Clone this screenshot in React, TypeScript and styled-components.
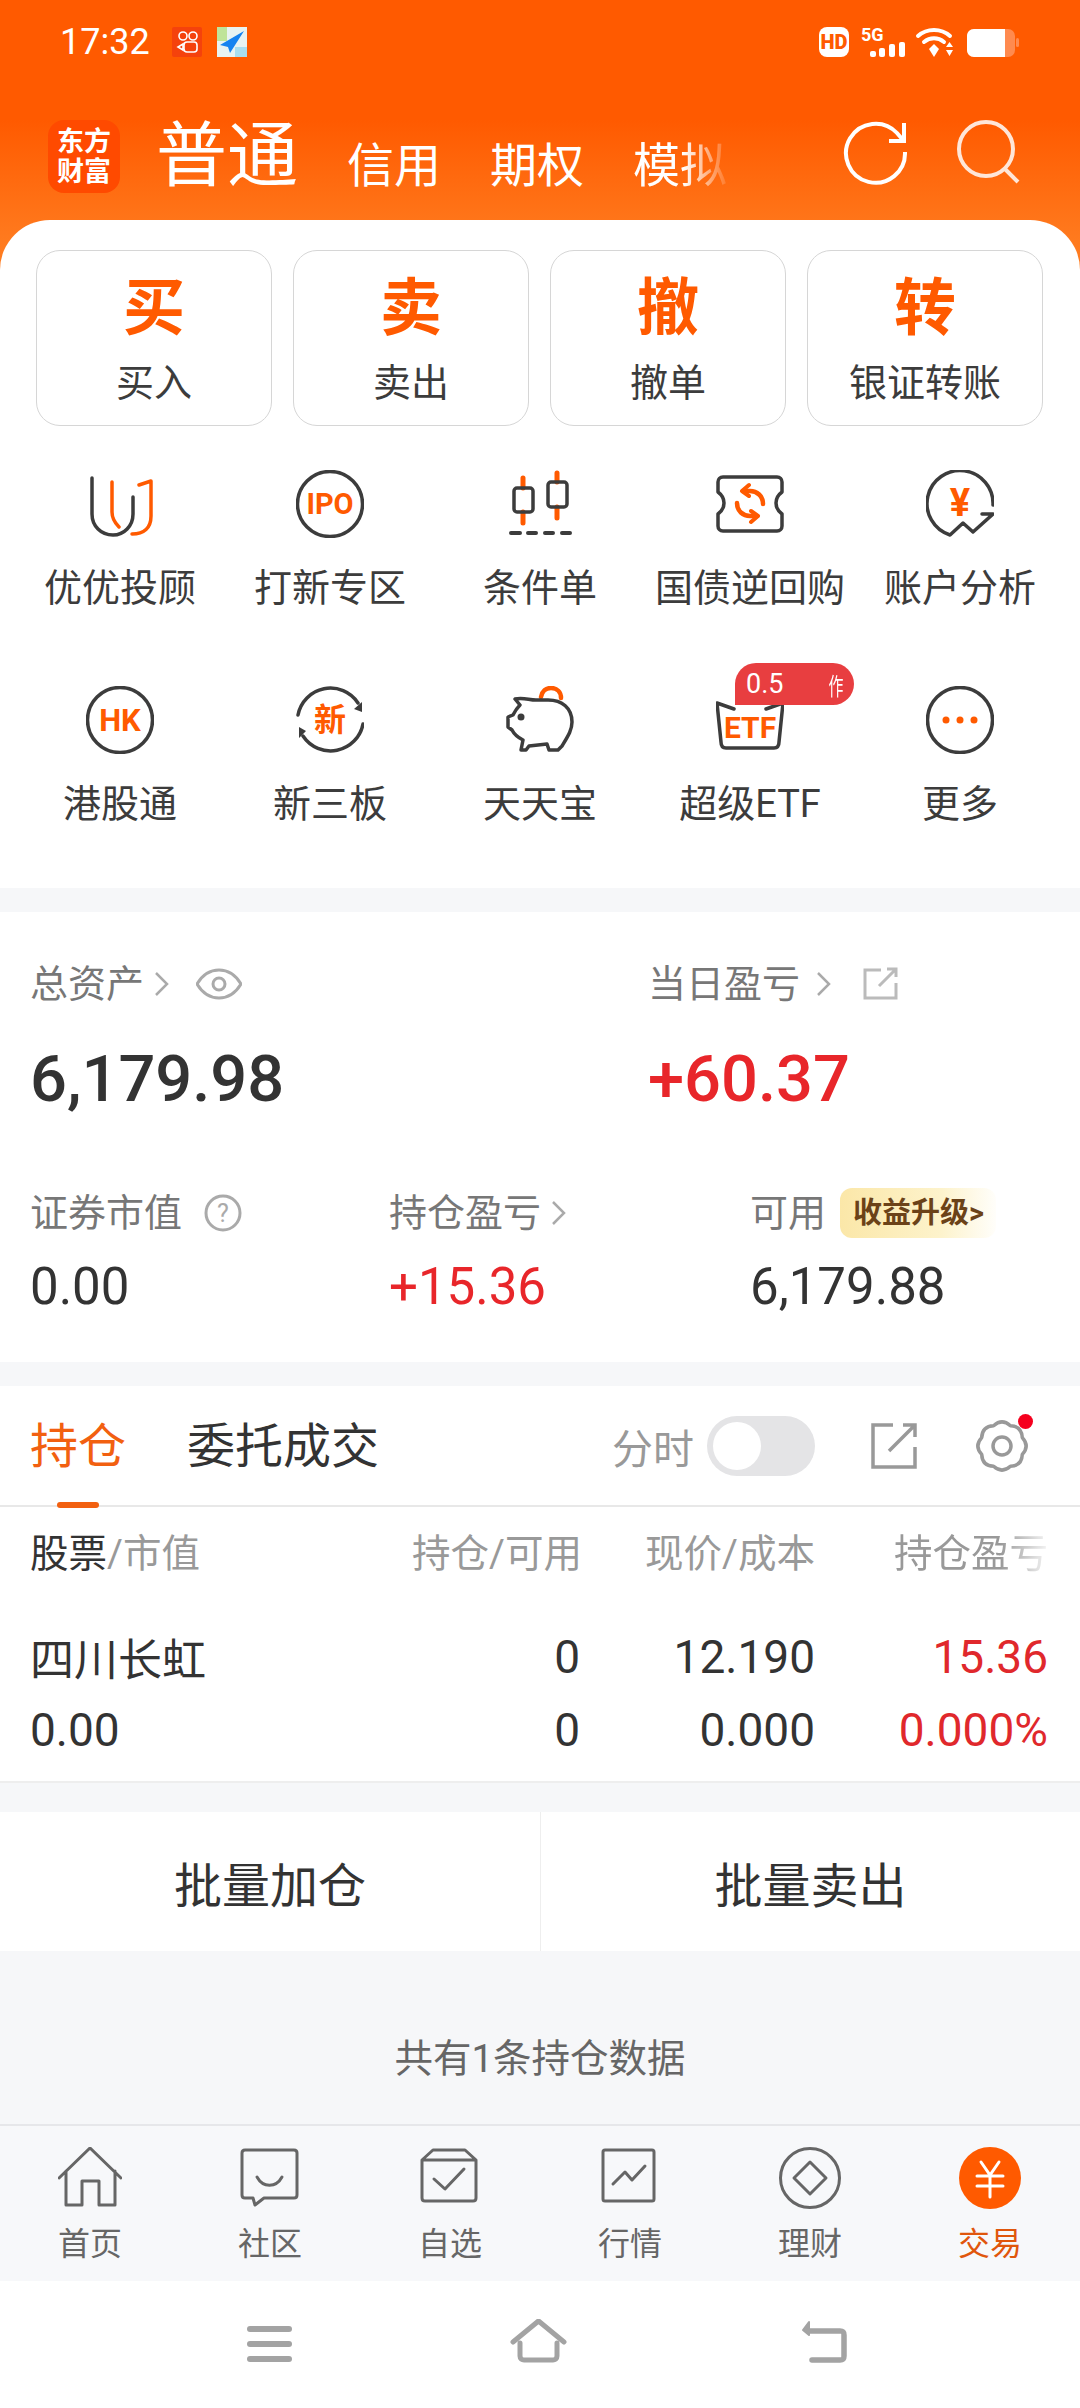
import React from "react";
import styled, { createGlobalStyle } from "styled-components";

const ORANGE = "#ff5a00";
const INK = "#3c3c3c";
const RED = "#e8262a";

const GlobalStyle = createGlobalStyle`
  html, body {
    margin: 0;
    padding: 0;
    background: #fff;
  }
  * {
    box-sizing: border-box;
  }
`;

const Page = styled.div`
  width: 1080px;
  height: 2408px;
  display: flex;
  flex-direction: column;
  overflow: hidden;
  background: #fff;
  color: #333;
  font-family: Roboto, "Noto Sans CJK SC", sans-serif;
`;

const Top = styled.div`
  background: linear-gradient(#ff5a00 0, #ff5a00 120px, #ff7a1e 240px, #ff7e22 280px) no-repeat;
  background-size: 100% 280px;
`;

const StatusBar = styled.div`
  height: 84px;
  padding: 0 60px;
  display: flex;
  align-items: center;
  color: #fff;
`;

const Clock = styled.div`
  font-size: 36px;
  width: 112px;
`;

const StatusRight = styled.div`
  margin-left: auto;
  display: flex;
  align-items: center;
`;

const AppIcon = styled.svg`
  margin-right: 15px;
  display: block;
`;

const TopNav = styled.div`
  height: 136px;
  padding: 36px 0 0 48px;
  display: flex;
  align-items: flex-start;
  color: #fff;
`;

const Logo = styled.div`
  width: 72px;
  height: 73px;
  border-radius: 16px;
  background: #ff4a00;
  display: grid;
  place-items: center;
  font-size: 27px;
  line-height: 30px;
  font-weight: 700;
  text-align: center;
`;

const MainTab = styled.div`
  margin-left: 36px;
  font-size: 71px;
  line-height: 76px;
  margin-top: -2px;
`;

const SubTab = styled.div<{ $fade?: boolean }>`
  margin-left: 49px;
  font-size: 47px;
  line-height: 56px;
  margin-top: 18px;
  ${(p) =>
    p.$fade &&
    "-webkit-mask-image: linear-gradient(90deg, #000 50px, rgba(0,0,0,.15) 92px); mask-image: linear-gradient(90deg, #000 50px, rgba(0,0,0,.15) 92px);"}
`;

const TopActions = styled.div`
  margin-left: auto;
  padding-right: 57px;
  display: flex;
  gap: 48px;
`;

const Sheet = styled.div`
  background: #fff;
  border-radius: 50px 50px 0 0;
  padding: 30px 37px 66px 36px;
`;

const ActionGrid = styled.div`
  display: grid;
  grid-template-columns: repeat(4, 1fr);
  gap: 21px;
`;

const ActionCard = styled.div`
  height: 176px;
  border: 1.5px solid #d6d6d6;
  border-radius: 24px;
  display: flex;
  flex-direction: column;
  align-items: center;
`;

const ActionGlyph = styled.div`
  font-size: 62px;
  line-height: 64px;
  font-weight: 700;
  color: ${ORANGE};
  margin-top: 26px;
`;

const ActionLabel = styled.div`
  font-size: 38px;
  line-height: 44px;
  margin-top: 20px;
  color: ${INK};
`;

const ShortcutGrid = styled.div`
  margin: 44px -21px 0;
  display: grid;
  grid-template-columns: repeat(5, 210px);
  grid-auto-rows: 136px;
  row-gap: 80px;
`;

const Shortcut = styled.div`
  position: relative;
  display: flex;
  flex-direction: column;
  align-items: center;
`;

const ShortcutLabel = styled.div`
  margin-top: 32px;
  font-size: 38px;
  line-height: 36px;
  color: ${INK};
  white-space: nowrap;
`;

const PromoBadge = styled.div`
  position: absolute;
  left: 90px;
  top: -23px;
  width: 119px;
  height: 42px;
  padding: 0 6px 0 11px;
  border-radius: 21px 21px 21px 0;
  background: #e83e40;
  color: #fff;
  font-size: 27px;
  display: flex;
  align-items: center;
  justify-content: space-between;
`;

const PromoGlyph = styled.span`
  display: inline-block;
  font-size: 24px;
  transform: scaleX(0.62);
`;

const Band = styled.div<{ $h: number }>`
  height: ${(p) => p.$h}px;
  flex: none;
  background: #f6f7f9;
`;

const Assets = styled.div`
  height: 450px;
  flex: none;
  padding: 55px 0 0 30px;
`;

const AssetRow = styled.div`
  display: grid;
  grid-template-columns: 618px 1fr;
`;

const DetailRow = styled.div`
  margin-top: 85px;
  display: grid;
  grid-template-columns: 359px 361px 1fr;
`;

const LabelLine = styled.div`
  height: 34px;
  display: flex;
  align-items: center;
  font-size: 38px;
  line-height: 34px;
  color: #777;
  white-space: nowrap;
`;

const BigValue = styled.div<{ $red?: boolean }>`
  margin-top: 46px;
  font-size: 65px;
  line-height: 64px;
  font-weight: 500;
  color: ${(p) => (p.$red ? RED : "#333")};
`;

const SmallValue = styled.div<{ $red?: boolean }>`
  margin-top: 32px;
  font-size: 51px;
  line-height: 50px;
  color: ${(p) => (p.$red ? RED : "#333")};
`;

const Upgrade = styled.div`
  margin-left: 14px;
  width: 156px;
  height: 50px;
  padding-left: 13px;
  border-radius: 12px;
  background: linear-gradient(90deg, #fbe7a8, #fdf3cc 65%, rgba(255, 250, 232, 0.2));
  color: #6b4218;
  font-size: 29px;
  line-height: 50px;
  font-weight: 700;
  white-space: nowrap;
`;

const TabBarTop = styled.div`
  height: 121px;
  flex: none;
  padding: 0 50px 0 30px;
  border-bottom: 2px solid #e8e8e8;
  display: flex;
  align-items: center;
`;

const PosTab = styled.div<{ $active?: boolean }>`
  position: relative;
  margin: 3px 61px 0 0;
  font-size: 48px;
  line-height: 60px;
  color: ${(p) => (p.$active ? "#f26010" : "#333")};
  ${(p) =>
    p.$active &&
    `&::after {
      content: "";
      position: absolute;
      left: 27px;
      bottom: -31px;
      width: 42px;
      height: 6px;
      border-radius: 3px;
      background: #f26010;
    }`}
`;

const TabTools = styled.div`
  margin-left: auto;
  display: flex;
  align-items: center;
`;

const ToolLabel = styled.div`
  font-size: 41px;
  color: #999;
  margin-right: 13px;
`;

const Toggle = styled.div`
  width: 108px;
  height: 60px;
  border-radius: 30px;
  background: #e4e4e6;
  padding: 6px;
  margin-right: 56px;
`;

const Knob = styled.div`
  width: 48px;
  height: 48px;
  border-radius: 50%;
  background: #fff;
`;

const ToolIcon = styled.svg`
  display: block;
`;

const GearWrap = styled.div`
  position: relative;
  margin-left: 57px;
`;

const RedDot = styled.div`
  position: absolute;
  right: -3px;
  top: -6px;
  width: 15px;
  height: 15px;
  border-radius: 50%;
  background: #f5001e;
`;

const TableRow = styled.div<{ $h: number }>`
  height: ${(p) => p.$h}px;
  flex: none;
  padding: 0 32px 0 30px;
  display: grid;
  grid-template-columns: 382px 168px 235px 233px;
  align-items: center;
`;

const HeadCell = styled.div<{ $left?: boolean; $fade?: boolean }>`
  font-size: 38.5px;
  line-height: 44px;
  margin-top: -3px;
  color: #999;
  white-space: nowrap;
  text-align: ${(p) => (p.$left ? "left" : "right")};
  ${(p) =>
    p.$fade &&
    "-webkit-mask-image: linear-gradient(90deg, #000 185px, rgba(0,0,0,.1) 233px); mask-image: linear-gradient(90deg, #000 185px, rgba(0,0,0,.1) 233px);"}
  b {
    font-weight: 400;
    color: #333;
  }
`;

const Cell = styled.div<{ $left?: boolean; $red?: boolean }>`
  font-size: 46px;
  color: ${(p) => (p.$red ? "#e0282c" : "#333")};
  white-space: nowrap;
  text-align: ${(p) => (p.$left ? "left" : "right")};
`;

const NameCell = styled(Cell)`
  font-size: 44px;
`;

const TableBody = styled.div`
  padding: 17px 0 15px;
  border-bottom: 2px solid #eeeeee;
  flex: none;
`;

const Batch = styled.div`
  height: 139px;
  flex: none;
  display: grid;
  grid-template-columns: 1fr 1fr;
  background: #fff;
`;

const BatchButton = styled.div<{ $divided?: boolean }>`
  display: grid;
  place-items: center;
  font-size: 48px;
  color: #333;
  border-left: ${(p) => (p.$divided ? "1.5px solid #eeeeee" : "none")};
`;

const Summary = styled.div`
  height: 173px;
  flex: none;
  padding-top: 86px;
  background: #f6f7f9;
  text-align: center;
  font-size: 38.5px;
  line-height: 44px;
  color: #666;
`;

const BottomTabs = styled.div`
  height: 157px;
  flex: none;
  border-top: 2px solid #e6e7ea;
  background: #f7f8fa;
  display: grid;
  grid-template-columns: repeat(6, 180px);
`;

const BottomTab = styled.div<{ $active?: boolean }>`
  display: flex;
  flex-direction: column;
  align-items: center;
  padding-top: 21px;
  font-size: 32px;
  line-height: 32px;
  color: ${(p) => (p.$active ? "#e0560c" : "#666")};
`;

const BottomIcon = styled.svg`
  display: block;
  margin-bottom: 19px;
`;

const SystemNav = styled.div`
  flex: 1;
  background: #fff;
  padding: 38px 0 0 247px;
  display: flex;
  align-items: flex-start;
`;

const SysIcon = styled.svg<{ $gap: number }>`
  display: block;
  margin-right: ${(p) => p.$gap}px;
`;

const IconWord = styled.text`
  font-family: Roboto, "Noto Sans CJK SC", sans-serif;
  font-weight: 700;
  text-anchor: middle;
`;

const S = { fill: "none", stroke: INK, strokeWidth: 3.5, strokeLinecap: "round", strokeLinejoin: "round" } as const;
const O = { ...S, stroke: ORANGE };

const Icon68: React.FC<{ children: React.ReactNode }> = ({ children }) => (
  <svg width="68" height="68" viewBox="0 0 68 68" style={{ display: "block", flex: "none" }}>
    {children}
  </svg>
);

// wavy 8-lobed outline for the settings gear
const gearPath = (() => {
  const cx = 28;
  const cy = 26;
  let d = "";
  for (let i = 0; i < 8; i++) {
    const a0 = (Math.PI / 4) * i - Math.PI / 8;
    const a1 = a0 + Math.PI / 8;
    const a2 = a0 + Math.PI / 4;
    const p0 = `${(cx + 22 * Math.cos(a0)).toFixed(1)} ${(cy + 22 * Math.sin(a0)).toFixed(1)}`;
    const c = `${(cx + 28 * Math.cos(a1)).toFixed(1)} ${(cy + 28 * Math.sin(a1)).toFixed(1)}`;
    const p2 = `${(cx + 22 * Math.cos(a2)).toFixed(1)} ${(cy + 22 * Math.sin(a2)).toFixed(1)}`;
    d += `${i === 0 ? `M${p0}` : ""}Q${c} ${p2}`;
  }
  return `${d}Z`;
})();

const shortcuts: { label: string; icon: React.ReactNode; badge?: boolean }[] = [
  {
    label: "优优投顾",
    icon: (
      <>
        <path {...S} d="M6 8V44C6 56 15 65 27 65C38 65 47 56 47 44V27" />
        <path {...O} d="M26 12V42C26 48 29 53 33 57" />
        <path {...O} d="M46 64C58 64 65 58 65 46V11L53 15" />
      </>
    ),
  },
  {
    label: "打新专区",
    icon: (
      <>
        <circle {...S} cx="34" cy="34" r="32.5" />
        <IconWord x="34" y="44" fontSize="29" fill={ORANGE}>IPO</IconWord>
      </>
    ),
  },
  {
    label: "条件单",
    icon: (
      <>
        <path {...O} strokeWidth="5" d="M17 8V18M17 42V53M51 3V12M51 37V48" />
        <rect {...S} x="8" y="18" width="19" height="24" rx="3" />
        <rect {...S} x="42" y="12" width="19" height="25" rx="3" />
        <path {...S} strokeWidth="4" d="M5 63H14M22 63H30M39 63H47M56 63H64" />
      </>
    ),
  },
  {
    label: "国债逆回购",
    icon: (
      <>
        <path {...S} d="M7 7H61C64 7 66 9 66 12V22C62 25 60 29 60 33C60 38 62 41 66 44V56C66 59 64 61 61 61H7C4 61 2 59 2 56V44C6 41 8 38 8 33C8 29 6 25 2 22V12C2 9 4 7 7 7Z" />
        <path {...O} strokeWidth="4.5" d="M47 34C47 26 41 21 34 21H29M21 33C21 41 27 46 34 46H39" />
        <path {...O} strokeWidth="4" d="M33 15L26 21L33 26M35 41L42 46L35 52" />
      </>
    ),
  },
  {
    label: "账户分析",
    icon: (
      <>
        <path {...S} d="M67 35A33 33 0 1 0 24 65L37 53L47 62L67 44H56" />
        <IconWord x="34" y="46" fontSize="38" fill={ORANGE}>¥</IconWord>
      </>
    ),
  },
  {
    label: "港股通",
    icon: (
      <>
        <circle {...S} cx="34" cy="34" r="32.5" />
        <IconWord x="34" y="45" fontSize="31" fill={ORANGE}>HK</IconWord>
      </>
    ),
  },
  {
    label: "新三板",
    icon: (
      <>
        <path {...S} d="M2 29A33 33 0 0 1 62 17M67 38A33 33 0 0 1 7 50" />
        <path fill={INK} d="M66 16V26L58 23ZM3 41L10 45L3 52Z" />
        <IconWord x="34" y="45" fontSize="32" fill={ORANGE}>新</IconWord>
      </>
    ),
  },
  {
    label: "天天宝",
    icon: (
      <>
        <path {...O} strokeWidth="4.5" d="M35 11C36 5 40 2 45 2C51 2 55 6 55 12" />
        <path {...S} d="M9 13C17 11 23 14 30 14H42C56 14 66 22 66 36C66 44 62 50 56 60L52 64H43L41 58L23 60L20 64H15L17 54C11 51 8 48 6 44L2 41V31L7 29C9 25 11 22 14 19Z" />
        <circle cx="15" cy="31" r="3.5" fill={INK} />
      </>
    ),
  },
  {
    label: "超级ETF",
    badge: true,
    icon: (
      <>
        <path {...S} d="M1 17L18 23M67 17L50 23M1 17L5 56C5 60 7 62 10 62H58C61 62 63 60 63 56L67 17" />
        <IconWord x="34" y="52" fontSize="30" fill={ORANGE}>ETF</IconWord>
      </>
    ),
  },
  {
    label: "更多",
    icon: (
      <>
        <circle {...S} cx="34" cy="34" r="32.5" />
        <circle cx="20" cy="34" r="3.5" fill={ORANGE} />
        <circle cx="34" cy="34" r="3.5" fill={ORANGE} />
        <circle cx="48" cy="34" r="3.5" fill={ORANGE} />
      </>
    ),
  },
];

const T = { fill: "none", stroke: "#666", strokeWidth: 3, strokeLinecap: "round", strokeLinejoin: "round" } as const;

const bottomTabs: { label: string; active?: boolean; icon: React.ReactNode }[] = [
  {
    label: "首页",
    icon: <path {...T} d="M1 31L32 1L63 31M8 24V58H24V34H41V58H57V24" />,
  },
  {
    label: "社区",
    icon: (
      <>
        <path {...T} d="M7 3H56C58 3 59 4 59 6V48C59 50 58 51 56 51H26L17 58L15 51H7C5 51 4 50 4 48V6C4 4 5 3 7 3Z" />
        <path {...T} d="M19 30C25 41 38 41 44 30" />
      </>
    ),
  },
  {
    label: "自选",
    icon: (
      <>
        <path {...T} d="M15 3H47L58 13V51C58 53 57 54 55 54H7C5 54 4 53 4 51V13ZM4 13H58" />
        <path {...T} d="M16 32L27 42L46 22" />
      </>
    ),
  },
  {
    label: "行情",
    icon: (
      <>
        <rect {...T} x="5" y="3" width="51" height="51" rx="2" />
        <path {...T} d="M15 37L27 25L34 33L47 19" />
      </>
    ),
  },
  {
    label: "理财",
    icon: (
      <>
        <circle {...T} cx="32" cy="31" r="29.5" />
        <path {...T} d="M32 15L48 31L32 47L16 31Z" />
      </>
    ),
  },
  {
    label: "交易",
    active: true,
    icon: (
      <>
        <circle cx="32" cy="31" r="31" fill={ORANGE} />
        <path fill="none" stroke="#fff" strokeWidth="3" strokeLinecap="round" d="M23 15L32 28L41 15M19 29H45M19 39H45M32 28V50" />
      </>
    ),
  },
];

const App: React.FC = () => (
  <Page>
    <GlobalStyle />
    <Top>
      <StatusBar>
        <Clock>17:32</Clock>
        <AppIcon width="30" height="30" viewBox="0 0 30 30">
          <rect width="30" height="30" rx="2" fill="#f5420c" />
          <g fill="none" stroke="#fff" strokeWidth="1.600">
            <circle cx="11" cy="9" r="4" />
            <circle cx="21" cy="9" r="4" />
            <rect x="12" y="15" width="13" height="10" rx="3" />
            <path d="M11 17L6 20L11 23Z" />
          </g>
        </AppIcon>
        <AppIcon width="30" height="30" viewBox="0 0 30 30">
          <rect width="30" height="30" fill="#e8f3f2" />
          <rect width="10" height="14" fill="#bfe49a" />
          <rect x="18" y="20" width="12" height="10" fill="#a8def0" />
          <path d="M27 4L3 18L11 20L13 26Z" fill="#1583f0" />
        </AppIcon>
        <StatusRight>
          <svg width="201" height="36" viewBox="0 0 201 36">
            <rect x="0" y="3" width="30" height="30" rx="8" fill="#fff" />
            <text x="15" y="25" textAnchor="middle" fontFamily="Roboto" fontSize="20" fontWeight="900" fill={ORANGE}>HD</text>
            <text x="42" y="17" fontFamily="Roboto" fontSize="18" fontWeight="700" fill="#fff">5G</text>
            <g fill="#fff">
              <rect x="51" y="27" width="6" height="6" rx="2" />
              <rect x="60" y="24" width="6" height="9" rx="2" />
              <rect x="70" y="20" width="6" height="13" rx="2" />
              <rect x="80" y="18" width="6" height="15" rx="2" />
            </g>
            <g fill="none" stroke="#fff" strokeWidth="4" strokeLinecap="round">
              <path d="M99 12C108 4 122 4 131 12" />
              <path d="M105 18C111 13 119 13 125 18" />
            </g>
            <path d="M110 25L115 20L120 25L115 33Z" fill="#fff" />
            <path d="M127 23L134 23L130.500 18ZM127 26H134L130.500 32Z" fill="#fff" />
            <rect x="148" y="5" width="48" height="28" rx="7" fill="#ff8a4f" />
            <path d="M155 5H186V33H155C151 33 148 30 148 26V12C148 8 151 5 155 5Z" fill="#fff" />
            <rect x="197" y="14" width="3" height="9" rx="1.500" fill="#ff8a4f" />
          </svg>
        </StatusRight>
      </StatusBar>
      <TopNav>
        <Logo>
          <span>
            东方
            <br />
            财富
          </span>
        </Logo>
        <MainTab>普通</MainTab>
        <SubTab>信用</SubTab>
        <SubTab>期权</SubTab>
        <SubTab $fade>模拟</SubTab>
        <TopActions>
          <svg width="66" height="66" viewBox="0 0 66 66" fill="none" stroke="#fff" strokeWidth="4">
            <path d="M62 32A29.500 29.500 0 1 1 54 13L60 20" />
            <path d="M46 21H61V3" />
          </svg>
          <svg width="66" height="66" viewBox="0 0 66 66" fill="none" stroke="#ffe6d8" strokeWidth="4">
            <circle cx="29" cy="29" r="27" />
            <path d="M48 49L61 62" />
          </svg>
        </TopActions>
      </TopNav>
      <Sheet>
        <ActionGrid>
          {[
            ["买", "买入"],
            ["卖", "卖出"],
            ["撤", "撤单"],
            ["转", "银证转账"],
          ].map(([glyph, label]) => (
            <ActionCard key={label}>
              <ActionGlyph>{glyph}</ActionGlyph>
              <ActionLabel>{label}</ActionLabel>
            </ActionCard>
          ))}
        </ActionGrid>
        <ShortcutGrid>
          {shortcuts.map((item) => (
            <Shortcut key={item.label}>
              <Icon68>{item.icon}</Icon68>
              <ShortcutLabel>{item.label}</ShortcutLabel>
              {item.badge && (
                <PromoBadge>
                  <span>0.5</span>
                  <PromoGlyph>作</PromoGlyph>
                </PromoBadge>
              )}
            </Shortcut>
          ))}
        </ShortcutGrid>
      </Sheet>
    </Top>
    <Band $h={24} />
    <Assets>
      <AssetRow>
        <LabelLine>
          总资产
          <svg width="20" height="30" viewBox="0 0 20 30" fill="none" stroke="#aaa" strokeWidth="2.500" style={{ marginLeft: 8 }}>
            <path d="M4 4L15 15L4 26" />
          </svg>
          <svg width="46" height="32" viewBox="0 0 46 32" fill="none" stroke="#aaa" strokeWidth="3" style={{ marginLeft: 24 }}>
            <path d="M1 16C7 6 14 2 23 2C32 2 39 6 45 16C39 26 32 30 23 30C14 30 7 26 1 16Z" />
            <circle cx="23" cy="16" r="6" />
          </svg>
        </LabelLine>
        <LabelLine>
          当日盈亏
          <svg width="20" height="30" viewBox="0 0 20 30" fill="none" stroke="#aaa" strokeWidth="2.500" style={{ marginLeft: 14 }}>
            <path d="M4 4L15 15L4 26" />
          </svg>
          <svg width="36" height="34" viewBox="0 0 36 34" fill="none" stroke="#bbb" strokeWidth="3" style={{ marginLeft: 29 }}>
            <path d="M18 3H2V31H33V16M16 19L33 2M24 2H33V10" />
          </svg>
        </LabelLine>
        <BigValue>6,179.98</BigValue>
        <BigValue $red>+60.37</BigValue>
      </AssetRow>
      <DetailRow>
        <LabelLine>
          证券市值
          <svg width="38" height="38" viewBox="0 0 38 38" style={{ marginLeft: 22 }}>
            <circle cx="19" cy="19" r="17" fill="none" stroke="#aaa" strokeWidth="3" />
            <text x="19" y="28" textAnchor="middle" fontFamily="Roboto" fontSize="25" fill="#aaa">?</text>
          </svg>
        </LabelLine>
        <LabelLine>
          持仓盈亏
          <svg width="20" height="30" viewBox="0 0 20 30" fill="none" stroke="#aaa" strokeWidth="2.500" style={{ marginLeft: 8 }}>
            <path d="M4 4L15 15L4 26" />
          </svg>
        </LabelLine>
        <LabelLine>
          可用
          <Upgrade>收益升级&gt;</Upgrade>
        </LabelLine>
        <SmallValue>0.00</SmallValue>
        <SmallValue $red>+15.36</SmallValue>
        <SmallValue>6,179.88</SmallValue>
      </DetailRow>
    </Assets>
    <Band $h={24} />
    <TabBarTop>
      <PosTab $active>持仓</PosTab>
      <PosTab>委托成交</PosTab>
      <TabTools>
        <ToolLabel>分时</ToolLabel>
        <Toggle>
          <Knob />
        </Toggle>
        <ToolIcon width="46" height="46" viewBox="0 0 46 46" fill="none" stroke="#999" strokeWidth="3.500">
          <path d="M22 2H2V44H44V24M18 28L44 2M32 2H44V14" />
        </ToolIcon>
        <GearWrap>
          <ToolIcon width="56" height="52" viewBox="0 0 56 52" fill="none" stroke="#999" strokeWidth="3.500" strokeLinejoin="round">
            <path d={gearPath} />
            <circle cx="28" cy="26" r="9" />
          </ToolIcon>
          <RedDot />
        </GearWrap>
      </TabTools>
    </TabBarTop>
    <TableRow $h={96}>
      <HeadCell $left>
        <b>股票</b>/市值
      </HeadCell>
      <HeadCell>持仓/可用</HeadCell>
      <HeadCell>现价/成本</HeadCell>
      <HeadCell $fade>持仓盈亏</HeadCell>
    </TableRow>
    <TableBody>
      <TableRow $h={73}>
        <NameCell $left>四川长虹</NameCell>
        <Cell>0</Cell>
        <Cell>12.190</Cell>
        <Cell $red>15.36</Cell>
      </TableRow>
      <TableRow $h={73}>
        <Cell $left>0.00</Cell>
        <Cell>0</Cell>
        <Cell>0.000</Cell>
        <Cell $red>0.000%</Cell>
      </TableRow>
    </TableBody>
    <Band $h={29} />
    <Batch>
      <BatchButton>批量加仓</BatchButton>
      <BatchButton $divided>批量卖出</BatchButton>
    </Batch>
    <Summary>共有1条持仓数据</Summary>
    <BottomTabs>
      {bottomTabs.map((tab) => (
        <BottomTab key={tab.label} $active={tab.active}>
          <BottomIcon width="64" height="62" viewBox="0 0 64 62">
            {tab.icon}
          </BottomIcon>
          {tab.label}
        </BottomTab>
      ))}
    </BottomTabs>
    <SystemNav>
      <SysIcon $gap={218} width="45" height="44" viewBox="0 0 45 44">
        <g fill="#a3a3a3">
          <rect y="7" width="45" height="6" rx="3" />
          <rect y="22" width="45" height="6" rx="3" />
          <rect y="37" width="45" height="6" rx="3" />
        </g>
      </SysIcon>
      <SysIcon $gap={233} width="57" height="44" viewBox="0 0 57 44" fill="none" stroke="#a3a3a3" strokeWidth="5" strokeLinejoin="round" strokeLinecap="round">
        <path d="M3 23L28.500 2L54 23M10 24V37C10 40 12 41 14 41H43C45 41 47 40 47 37V24" />
      </SysIcon>
      <SysIcon $gap={0} width="47" height="44" viewBox="0 0 47 44" fill="none" stroke="#a3a3a3" strokeWidth="5.500" strokeLinejoin="round" strokeLinecap="round">
        <path d="M10 12H40C43 12 44 13 44 16V37C44 40 43 41 40 41H12" />
        <path d="M9 3L3 11L9 16Z" fill="#a3a3a3" strokeWidth="2" />
      </SysIcon>
    </SystemNav>
  </Page>
);

export default App;
